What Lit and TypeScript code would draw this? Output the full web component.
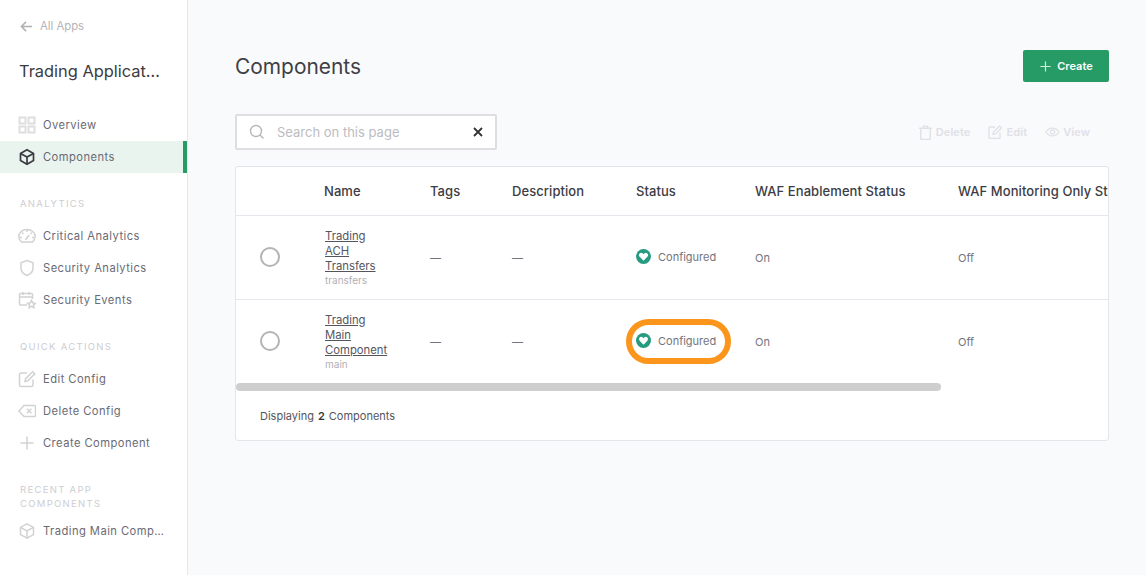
import { LitElement, html, css, svg } from "lit";
import { customElement } from "lit/decorators.js";

const box = svg`<path d="M9 1.800l6.500 3.600v7.200L9 16.200l-6.500-3.600V5.400z"/><path d="M2.500 5.400L9 9l6.500-3.600M9 9v7.200"/>`;

const icons: Record<string, unknown> = {
  grid: svg`<path stroke="#dedede" stroke-width="2" d="M1.500 1.500h6v6h-6zM10.500 1.500h6v6h-6zM1.500 10.500h6v6h-6zM10.500 10.500h6v6h-6z"/>`,
  box,
  gauge: svg`<path d="M3.500 15A8 8 0 0 1 .8 9.500a8.200 7 0 0 1 16.400 0A8 8 0 0 1 14.500 15z"/><path d="M9 3v2M4 5.500l1.500 1.500M14 5.500L12.500 7M2 10.500h2M14 10.500h2M7.500 13L11 8"/>`,
  shield: svg`<path d="M9 1.500l6 2.200v5.300c0 3.700-2.600 6.200-6 7.500-3.400-1.300-6-3.800-6-7.500V3.700z"/>`,
  calendar: svg`<path d="M9 14H2.500a1 1 0 0 1-1-1V3.500a1 1 0 0 1 1-1h11a1 1 0 0 1 1 1V8M1.500 6h13M5 1v3M11 1v3"/><path d="M13.500 9.500l1.200 2.400 2.600.4-1.900 1.800.5 2.600-2.400-1.300-2.400 1.300.5-2.600-1.900-1.800 2.600-.4z"/>`,
  edit: svg`<path d="M15 9.500v5.500a1.500 1.500 0 0 1-1.500 1.500H3A1.500 1.500 0 0 1 1.500 15V4.500A1.500 1.500 0 0 1 3 3h6"/><path d="M7 11.500l.6-2.800 7-7 2.200 2.200-7 7z"/>`,
  backspace: svg`<path d="M6 3.500h10.500a1 1 0 0 1 1 1v9a1 1 0 0 1-1 1H6L1 9z"/><path d="M9 6.800l4.400 4.400M13.400 6.800L9 11.200"/>`,
  plus: svg`<path d="M9 2.500v13M2.500 9h13"/>`,
};

function icon(name: string) {
  return html`<svg class="ico" viewBox="0 0 18 18" width="18" height="18">${icons[name]}</svg>`;
}

type NavItem = { label: string; icon: string; active?: boolean };

const mainNav: NavItem[] = [
  { label: "Overview", icon: "grid" },
  { label: "Components", icon: "box", active: true },
];
const analytics: NavItem[] = [
  { label: "Critical Analytics", icon: "gauge" },
  { label: "Security Analytics", icon: "shield" },
  { label: "Security Events", icon: "calendar" },
];
const actions: NavItem[] = [
  { label: "Edit Config", icon: "edit" },
  { label: "Delete Config", icon: "backspace" },
  { label: "Create Component", icon: "plus" },
];
const recent: NavItem[] = [{ label: "Trading Main Component", icon: "box" }];

const rows = [
  { name: ["Trading", "ACH", "Transfers"], slug: "transfers", mark: false },
  { name: ["Trading", "Main", "Component"], slug: "main", mark: true },
];

@customElement("app-root")
export class AppRoot extends LitElement {
  static styles = css`
    :host {
      display: flex;
      height: 575px;
      overflow: hidden;
      background: #f9fafc;
      color: #333;
      font-family: Inter, "Liberation Sans", sans-serif;
    }
    .side {
      box-sizing: border-box;
      width: 188px;
      flex: none;
      background: #fff;
      border-right: 1px solid #e8e8ec;
      padding-top: 17px;
    }
    .back {
      display: flex;
      align-items: center;
      gap: 7px;
      height: 18px;
      padding-left: 20px;
      font-size: 11.300px;
      color: #b4b4b8;
    }
    .back svg {
      fill: none;
      stroke: #b0b0b0;
      stroke-width: 1.600;
    }
    .app-name {
      margin: 24px 26px 0 19px;
      height: 24px;
      line-height: 24px;
      font-size: 16.400px;
      font-weight: 400;
      color: #3b3b40;
      white-space: nowrap;
      overflow: hidden;
      text-overflow: ellipsis;
    }
    .group-main {
      margin-top: 26px;
    }
    .nav-row {
      display: flex;
      align-items: center;
      height: 32px;
      padding-left: 18px;
      gap: 7px;
      font-size: 11.200px;
      letter-spacing: 0.450px;
      color: #6a6a74;
    }
    .nav-row span {
      white-space: nowrap;
      overflow: hidden;
      text-overflow: ellipsis;
      width: 122px;
    }
    .nav-row.active {
      background: #e9f4ef;
      box-shadow: inset -4px 0 0 #269b66;
    }
    .ico {
      flex: none;
      fill: none;
      stroke: #d2d2d2;
      stroke-width: 1.500;
    }
    .active .ico {
      stroke: #3a3a40;
      stroke-width: 1.700;
    }
    .heading {
      margin: 0 20px;
      font-size: 9.500px;
      line-height: 14px;
      letter-spacing: 1.300px;
      font-weight: 400;
      color: #cdcdd2;
      text-transform: uppercase;
    }
    .analytics {
      margin-top: 24px;
    }
    .analytics .heading,
    .quick .heading {
      margin-bottom: 9px;
    }
    .quick {
      margin-top: 24px;
    }
    .recent {
      margin-top: 24px;
    }
    .recent .heading {
      margin-right: 40px;
      margin-bottom: 4px;
    }

    .main {
      flex: 1;
      min-width: 0;
      padding: 50px 37px 0 47px;
    }
    .top {
      display: flex;
      justify-content: space-between;
      align-items: center;
      height: 32px;
    }
    h1 {
      margin: 0;
      font-size: 20.900px;
      font-weight: 400;
      color: #3f3f46;
    }
    .create {
      display: flex;
      align-items: center;
      justify-content: center;
      gap: 5px;
      box-sizing: border-box;
      width: 86px;
      height: 32px;
      background: #269b66;
      border: 0;
      border-radius: 2px;
      color: #fff;
      font: 600 11px Inter, "Liberation Sans", sans-serif;
    }
    .create svg {
      fill: none;
      stroke: #d3ecdf;
      stroke-width: 1.300;
    }
    .tools {
      display: flex;
      justify-content: space-between;
      align-items: center;
      margin-top: 32px;
      height: 36px;
    }
    .search {
      display: flex;
      align-items: center;
      box-sizing: border-box;
      width: 262px;
      height: 36px;
      background: #fff;
      border: 2px solid #dedee0;
      border-radius: 2px;
      padding: 0 12px;
      font-size: 13px;
      color: #bcbcc2;
    }
    .search .glass {
      fill: none;
      stroke: #b8b8b8;
      stroke-width: 1.400;
      margin-right: 12px;
    }
    .search span {
      flex: 1;
    }
    .search .clear {
      fill: none;
      stroke: #333;
      stroke-width: 1.800;
    }
    .actions {
      display: flex;
      gap: 18px;
      padding-right: 19px;
      font-size: 11px;
      letter-spacing: 0.100px;
      font-weight: 600;
      color: #e0e0e6;
    }
    .action {
      display: flex;
      align-items: center;
      gap: 3px;
    }
    .action svg {
      fill: none;
      stroke: #e0e0e6;
      stroke-width: 1.300;
    }
    .card {
      position: relative;
      box-sizing: border-box;
      margin-top: 16px;
      height: 275px;
      background: #fff;
      border: 1px solid #e4e4ea;
      border-radius: 3px;
      overflow: hidden;
    }
    .tr {
      display: grid;
      grid-template-columns: 88px 106px 82px 124px 119px 203px 300px;
      align-items: center;
      height: 84px;
      border-top: 1px solid #e6e6ec;
      box-sizing: border-box;
      font-size: 11px;
      color: #74747c;
    }
    .tr.head {
      height: 48px;
      border-top: 0;
      font-size: 13px;
      letter-spacing: 0.070px;
      font-weight: 500;
      color: #3c3c44;
      white-space: nowrap;
    }
    .radio {
      box-sizing: border-box;
      width: 20px;
      height: 20px;
      margin: 0 0 2px 24px;
      border: 2px solid #b4b4b8;
      border-radius: 50%;
    }
    .name {
      padding-left: 1px;
    }
    .name a {
      display: block;
      font-size: 11.300px;
      line-height: 15px;
      color: #55555e;
      text-decoration: underline;
    }
    .name small {
      display: block;
      font-size: 10px;
      line-height: 13px;
      color: #b0b0b6;
    }
    .status {
      position: relative;
      display: flex;
      align-items: center;
      gap: 7px;
      margin-bottom: 2px;
    }
    .status svg {
      flex: none;
    }
    .mark {
      position: absolute;
      left: -10px;
      top: 50%;
      margin-top: -22px;
      box-sizing: border-box;
      width: 105px;
      height: 45px;
      border: 6px solid #fb951c;
      border-radius: 23px;
    }
    .scroll {
      height: 8px;
      background: #fff;
    }
    .thumb {
      height: 8px;
      background: #cecece;
      border-radius: 4px;
    }
    .foot {
      display: flex;
      align-items: center;
      height: 49px;
      padding-left: 24px;
      font-size: 11px;
      color: #55555e;
    }
    .foot b {
      margin: 0 4px;
      font-weight: 600;
      color: #333;
    }
  `;

  private navRow(item: NavItem) {
    return html`<div class="nav-row ${item.active ? "active" : ""}">
      ${icon(item.icon)}<span>${item.label}</span>
    </div>`;
  }

  render() {
    return html`
      <aside class="side">
        <div class="back">
          <svg viewBox="0 0 14 14" width="13" height="13"><path d="M13 7H1.500M6.500 2l-5 5 5 5" /></svg>
          All Apps
        </div>
        <h2 class="app-name">Trading Application</h2>
        <div class="group-main">${mainNav.map((n) => this.navRow(n))}</div>
        <section class="analytics">
          <h3 class="heading">Analytics</h3>
          ${analytics.map((n) => this.navRow(n))}
        </section>
        <section class="quick">
          <h3 class="heading">Quick Actions</h3>
          ${actions.map((n) => this.navRow(n))}
        </section>
        <section class="recent">
          <h3 class="heading">Recent App Components</h3>
          ${recent.map((n) => this.navRow(n))}
        </section>
      </aside>
      <main class="main">
        <div class="top">
          <h1>Components</h1>
          <button class="create">
            <svg viewBox="0 0 14 14" width="13" height="13"><path d="M7 1.500v11M1.500 7h11" /></svg>
            Create
          </button>
        </div>
        <div class="tools">
          <div class="search">
            <svg class="glass" viewBox="0 0 16 16" width="16" height="16"><circle cx="7" cy="7" r="5.500" /><path d="M11 11l3.500 3.500" /></svg>
            <span>Search on this page</span>
            <svg class="clear" viewBox="0 0 10 10" width="10" height="10"><path d="M1 1l8 8M9 1l-8 8" /></svg>
          </div>
          <div class="actions">
            <div class="action">
              <svg viewBox="0 0 14 14" width="15" height="15"><path d="M2.500 3h9v9.500a1 1 0 0 1-1 1h-7a1 1 0 0 1-1-1zM1 3h12M5 3V1h4v2" /></svg>
              Delete
            </div>
            <div class="action">
              <svg viewBox="0 0 15 14" width="15" height="14"><path d="M12 7.500v5a1 1 0 0 1-1 1H2a1 1 0 0 1-1-1V3a1 1 0 0 1 1-1h5" /><path d="M5 9.500l.5-2.500 6-6 2 2-6 6z" /></svg>
              Edit
            </div>
            <div class="action">
              <svg viewBox="0 0 16 14" width="15" height="14"><path d="M1 7c1.700-2.800 4-4.200 7-4.200S13.300 4.200 15 7c-1.700 2.800-4 4.200-7 4.200S2.700 9.800 1 7z" /><circle cx="8" cy="7" r="2.300" /></svg>
              View
            </div>
          </div>
        </div>
        <div class="card">
          <div class="tr head">
            <div></div>
            <div>Name</div>
            <div>Tags</div>
            <div>Description</div>
            <div>Status</div>
            <div>WAF Enablement Status</div>
            <div>WAF Monitoring Only Status</div>
          </div>
          ${rows.map(
            (r) => html`<div class="tr">
              <div><div class="radio"></div></div>
              <div class="name">
                ${r.name.map((l) => html`<a>${l}</a>`)}
                <small>${r.slug}</small>
              </div>
              <div>—</div>
              <div>—</div>
              <div class="status">
                <svg viewBox="0 0 16 16" width="15" height="15">
                  <circle cx="8" cy="8" r="8" fill="#269b80" />
                  <path d="M8 12.500L3.900 8.300a2.400 2.400 0 0 1 3.400-3.400l.7.7.700-.7a2.400 2.400 0 0 1 3.400 3.400z" fill="#fff" />
                </svg>
                Configured
                ${r.mark ? html`<div class="mark"></div>` : ""}
              </div>
              <div>On</div>
              <div>Off</div>
            </div>`
          )}
          <div class="scroll"><div class="thumb" style="width: 705px"></div></div>
          <div class="foot">Displaying <b>2</b> Components</div>
        </div>
      </main>
    `;
  }
}
